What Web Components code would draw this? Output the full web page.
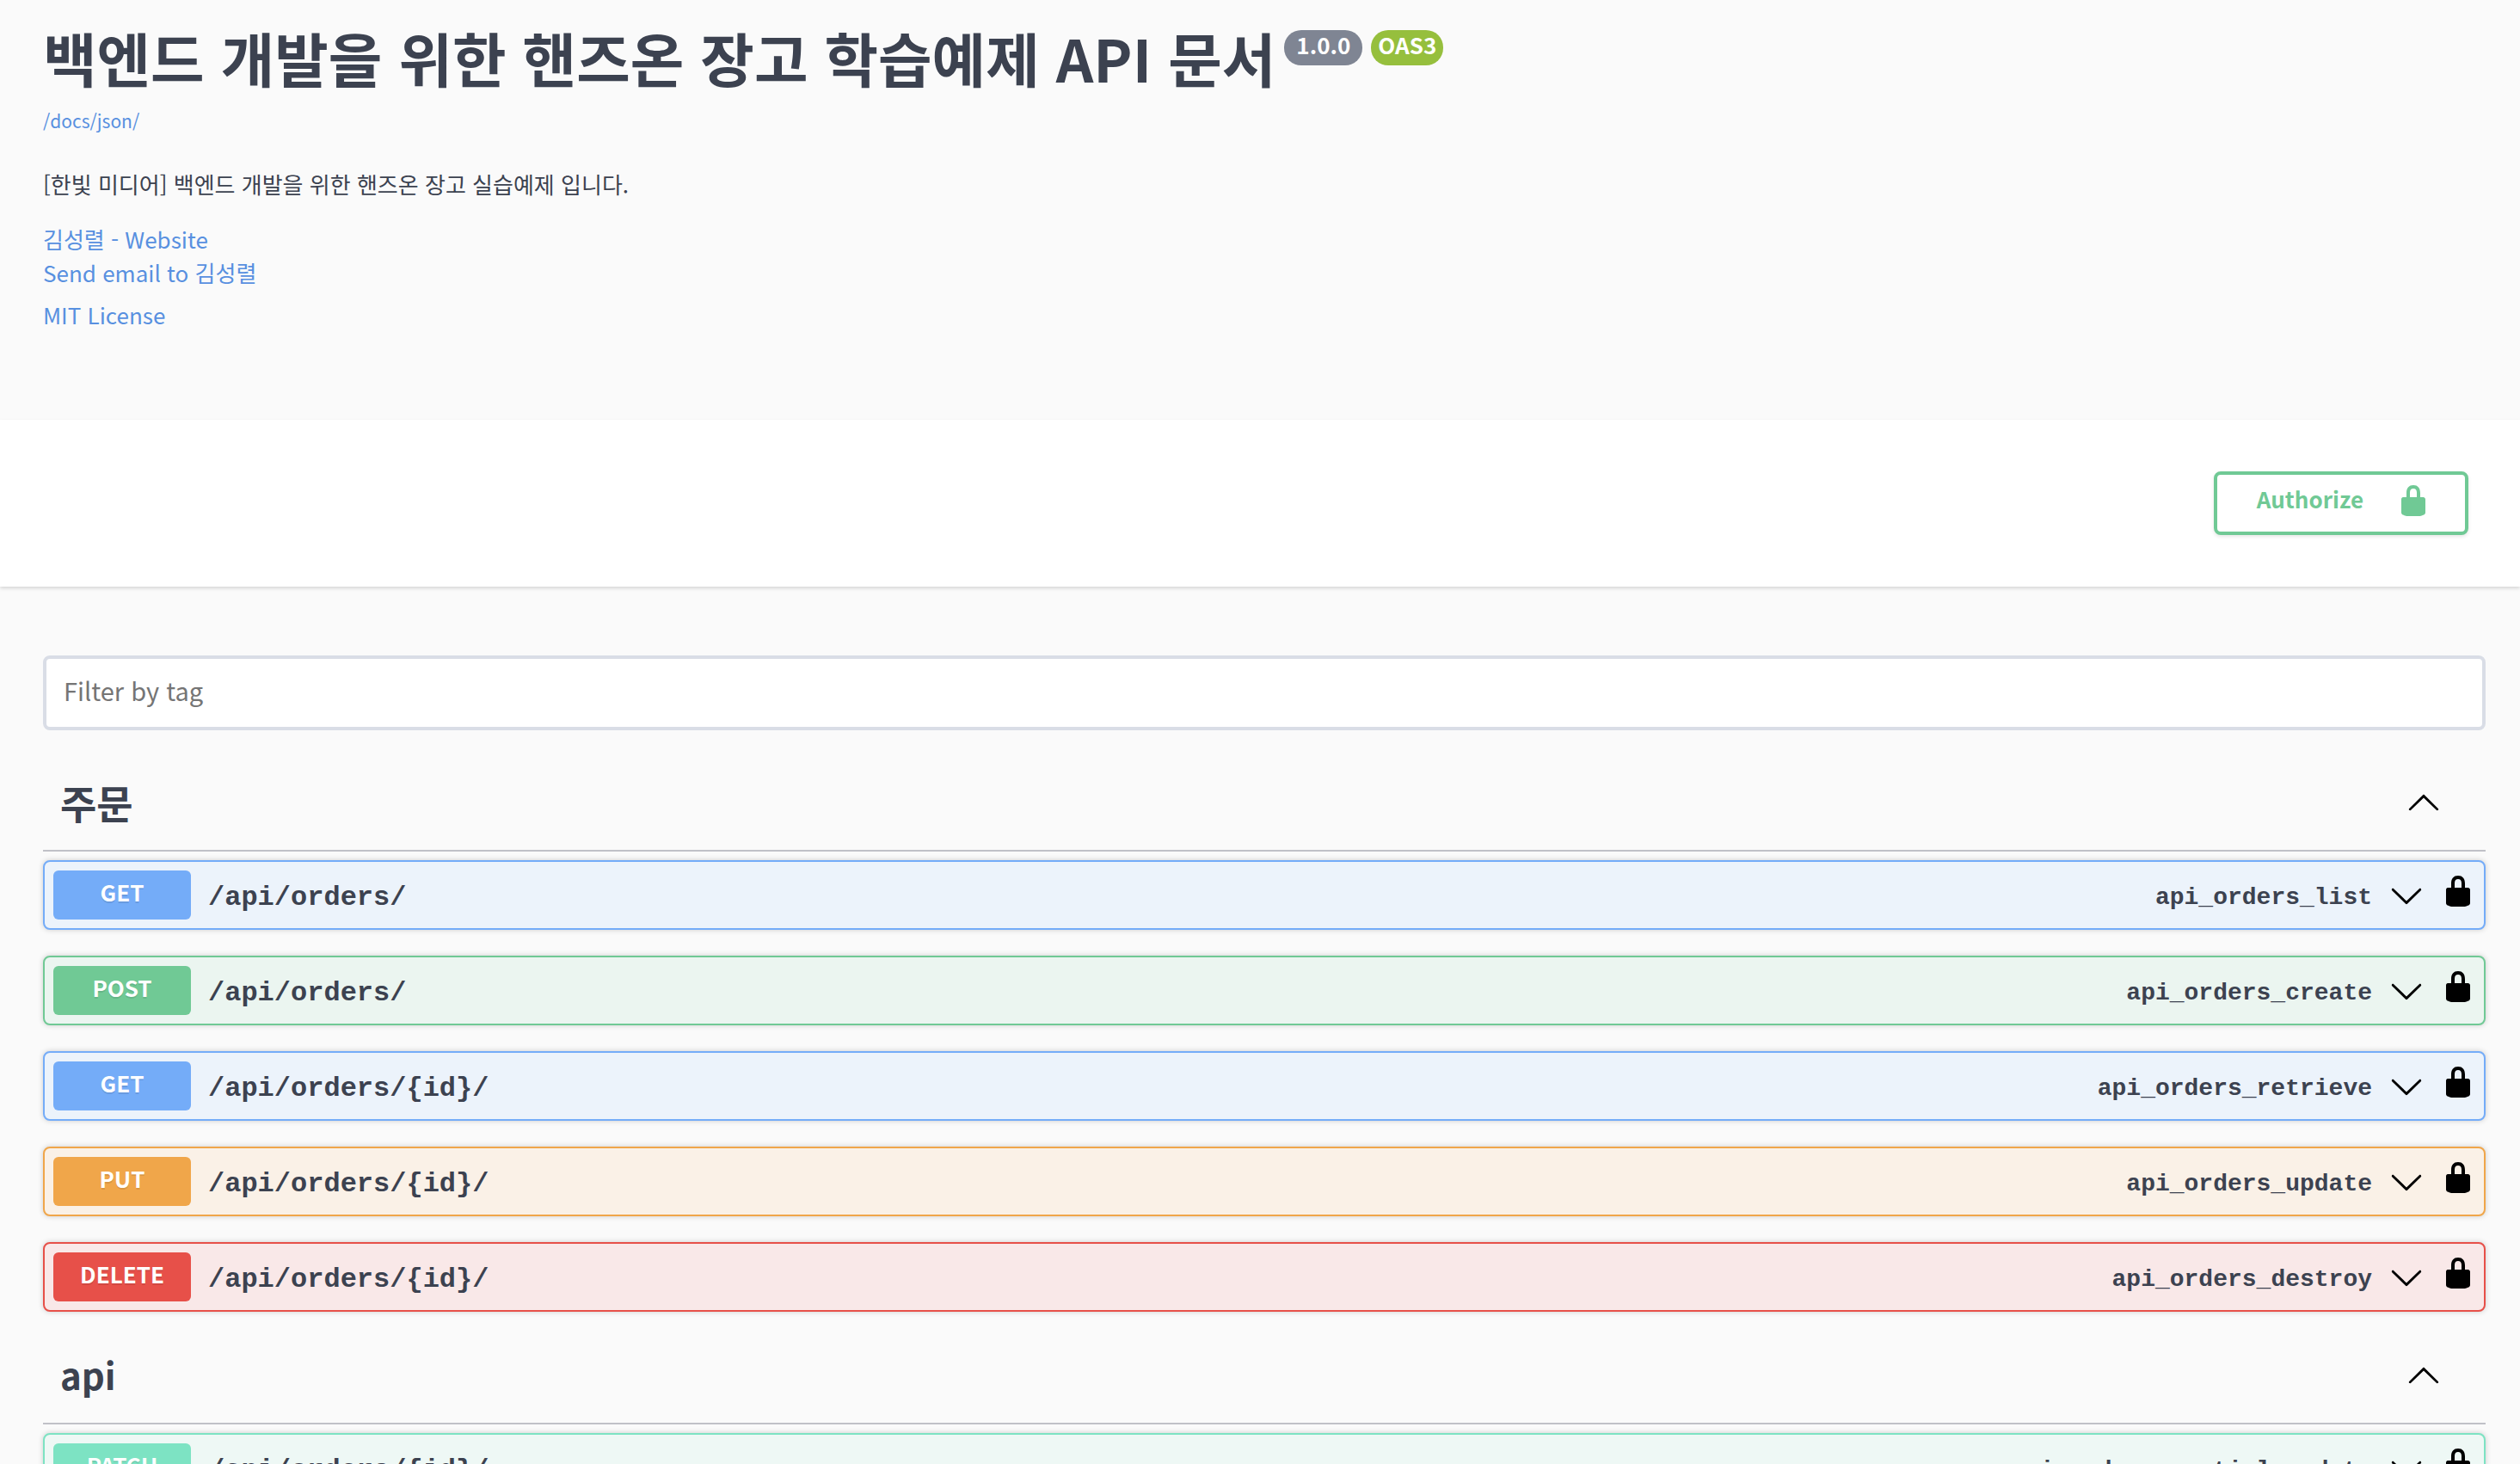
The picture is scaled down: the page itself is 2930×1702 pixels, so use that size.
<!DOCTYPE html>
<html lang="ko">
<head>
<meta charset="utf-8">
<meta name="viewport" content="width=device-width, initial-scale=1">
<title>백엔드 개발을 위한 핸즈온 장고 학습예제 API 문서</title>
<style>
  :root {
    --ink: #3c4250;
    --link: #5890e0;
    --page: #fafafa;
    --get: #74acf8;
    --get-tint: #ecf3fb;
    --post: #70c995;
    --post-tint: #ebf5f0;
    --put: #f0a64a;
    --put-tint: #faf1e7;
    --delete: #e75049;
    --delete-tint: #f9e8e8;
    --patch: #7de3c3;
    --patch-tint: #eef8f5;
    --mono: "Liberation Mono", monospace;
  }
  body {
    margin: 0;
    background: var(--page);
    color: var(--ink);
    font: 26px/39px "Noto Sans CJK KR", "Open Sans", sans-serif;
  }
</style>
</head>
<body>
<api-docs>
  <api-info slot="info" version="1.0.0" spec="OAS3" url="/docs/json/">
    <span slot="title">백엔드 개발을 위한 핸즈온 장고 학습예제 API 문서</span>
    <span slot="description">[한빛 미디어] 백엔드 개발을 위한 핸즈온 장고 실습예제 입니다.</span>
    <info-link slot="contact" href="#website">김성렬 - Website</info-link>
    <info-link slot="contact" href="#email">Send email to 김성렬</info-link>
    <info-link slot="license" href="#license">MIT License</info-link>
  </api-info>
  <auth-bar slot="auth">Authorize</auth-bar>
  <tag-filter></tag-filter>
  <tag-section name="주문" lang="ko">
    <api-operation method="get" path="/api/orders/" operation="api_orders_list"></api-operation>
    <api-operation method="post" path="/api/orders/" operation="api_orders_create"></api-operation>
    <api-operation method="get" path="/api/orders/{id}/" operation="api_orders_retrieve"></api-operation>
    <api-operation method="put" path="/api/orders/{id}/" operation="api_orders_update"></api-operation>
    <api-operation method="delete" path="/api/orders/{id}/" operation="api_orders_destroy"></api-operation>
  </tag-section>
  <tag-section name="api" lang="en">
    <api-operation method="patch" path="/api/orders/{id}/" operation="api_orders_partial_update"></api-operation>
  </tag-section>
</api-docs>

<script>
const ICONS = {
  lock: 'M15.8 8H14V5.6C14 2.703 12.665 1 10 1 7.334 1 6 2.703 6 5.6V8H4c-.553 0-1 .646-1 1.199V17c0 .549.428 1.139.951 1.307l1.197.387C5.672 18.861 6.55 19 7.1 19h5.8c.549 0 1.428-.139 1.951-.307l1.196-.387c.524-.167.953-.757.953-1.306V9.199C17 8.646 16.352 8 15.8 8zM12 8H8V5.199C8 3.754 8.797 3 10 3c1.203 0 2 .754 2 2.199V8z',
  down: 'M17.418 6.109c.272-.268.709-.268.979 0s.271.701 0 .969l-7.908 7.83c-.27.268-.707.268-.979 0l-7.908-7.83c-.27-.268-.27-.701 0-.969.271-.268.709-.268.979 0L10 13.25l7.418-7.141z',
  up: 'M17.418 14.908c.272.268.709.268.979 0s.271-.701 0-.969l-7.908-7.83c-.27-.268-.707-.268-.979 0l-7.908 7.83c-.27.268-.27.701 0 .969.271.268.709.268.979 0L10 7.767l7.418 7.141z'
};

class BaseElement extends HTMLElement {
  connectedCallback() {
    if (this.shadowRoot) return;
    this.attachShadow({ mode: 'open' }).innerHTML = `
      <style>
        button { margin: 0; border: 0; background: none; color: inherit; font: inherit; cursor: pointer; }
        a { color: var(--link); text-decoration: none; }
        ${this.css()}
      </style>${this.html()}`;
  }
  css() { return ''; }
  html() { return '<slot></slot>'; }
}

// 20x20 glyph shown at 40px
class DocIcon extends BaseElement {
  css() { return ':host { display: block; flex: none; width: 40px; height: 40px; } svg { display: block; width: 100%; height: 100%; fill: currentColor; }'; }
  html() { return `<svg viewBox="0 0 20 20" aria-hidden="true"><path d="${ICONS[this.getAttribute('name')]}"/></svg>`; }
}

// Page frame that scrolls inside the window
class ApiDocs extends BaseElement {
  css() {
    return `
      :host { display: block; height: 100vh; overflow: auto; scrollbar-width: none; }
      main { padding: 80px 40px 60px 50px; }`;
  }
  html() { return '<slot name="info"></slot><slot name="auth"></slot><main><slot></slot></main>'; }
}

class ApiInfo extends BaseElement {
  css() {
    return `
      :host { display: block; padding: 27px 40px 103px 50px; }
      .title { display: flex; align-items: flex-start; gap: 10px; }
      h1 { margin: 0; font-size: 68px; line-height: 80px; font-weight: 700; }
      .pill { margin-top: 8px; padding: 0 14px 8px; border-radius: 20px; background: #7f8593; color: #fff; line-height: 33px; font-weight: 700; }
      .pill.spec { padding: 0 8px 8px; background: #96bf3d; }
      .url { display: block; margin-top: 18px; font-size: 21px; line-height: 30px; }
      p { margin: 39px 0 24px; line-height: 40px; }
      .license { margin-top: 10px; }`;
  }
  html() {
    const url = this.getAttribute('url');
    return `
      <div class="title">
        <h1><slot name="title"></slot></h1>
        <span class="pill">${this.getAttribute('version')}</span>
        <span class="pill spec">${this.getAttribute('spec')}</span>
      </div>
      <a class="url" href="${url}">${url}</a>
      <p><slot name="description"></slot></p>
      <div><slot name="contact"></slot></div>
      <div class="license"><slot name="license"></slot></div>`;
  }
}

class InfoLink extends BaseElement {
  css() { return ':host { display: block; }'; }
  html() { return `<a href="${this.getAttribute('href')}"><slot></slot></a>`; }
}

class AuthBar extends BaseElement {
  css() {
    return `
      :host { display: flex; justify-content: flex-end; padding: 60px; background: #fff; box-shadow: 0 2px 4px rgba(0, 0, 0, .15); }
      button { display: flex; align-items: flex-start; gap: 38px; padding: 10px 40px 16px 46px; border: 4px solid var(--post); border-radius: 8px; background: #fff; color: var(--post); line-height: 36px; font-weight: 700; box-shadow: 0 2px 4px rgba(0, 0, 0, .1); }`;
  }
  html() { return '<button type="button"><slot></slot><doc-icon name="lock"></doc-icon></button>'; }
}

class TagFilter extends BaseElement {
  css() {
    return `
      :host { display: block; margin-bottom: 40px; }
      input { display: block; box-sizing: border-box; width: 100%; margin: 0; padding: 12px 20px 20px; border: 4px solid #d9dde6; border-radius: 8px; background: #fff; color: var(--ink); font: inherit; font-size: 29px; line-height: 46px; height: 87px; }
      input::placeholder { color: #757575; opacity: 1; }`;
  }
  html() { return '<input type="text" placeholder="Filter by tag" aria-label="Filter by tag">'; }
}

class TagSection extends BaseElement {
  css() {
    return `
      :host { display: block; }
      header { display: flex; align-items: center; justify-content: space-between; padding: 8px 52px 21px 20px; border-bottom: 2px solid #c0c1c7; }
      h3 { margin: 0; font-size: 46px; line-height: 70px; font-weight: 700; }
      :host(:lang(en)) h3 { font-size: 42px; }
      button { padding: 0; color: #000; }
      .list { display: grid; gap: 30px; padding: 10px 0 30px; }`;
  }
  html() {
    const name = this.getAttribute('name');
    return `
      <header><h3>${name}</h3><button type="button" aria-label="${name}"><doc-icon name="up"></doc-icon></button></header>
      <div class="list"><slot></slot></div>`;
  }
}

class ApiOperation extends BaseElement {
  css() {
    const m = this.getAttribute('method');
    return `
      :host { display: flex; align-items: flex-start; gap: 20px; padding: 10px; border: 2px solid var(--${m}); border-radius: 8px; background: var(--${m}-tint); box-shadow: 0 0 6px rgba(0, 0, 0, .19); }
      .summary { flex: 1; display: flex; align-items: center; gap: 20px; min-width: 0; padding: 0; text-align: left; }
      .method { width: 160px; padding: 7px 0 14px; border-radius: 6px; background: var(--${m}); color: #fff; line-height: 36px; font-weight: 700; text-align: center; text-shadow: 0 2px 0 rgba(0, 0, 0, .1); }
      .path, .id { padding-top: 6px; font-family: var(--mono); font-weight: 700; line-height: 40px; }
      .path { flex: 1; font-size: 32px; }
      .id { font-size: 28px; }
      .summary doc-icon { color: #000; }
      .auth { padding: 4px 0 0; color: #000; }`;
  }
  html() {
    return `
      <button class="summary" type="button">
        <span class="method">${this.getAttribute('method').toUpperCase()}</span>
        <span class="path">${this.getAttribute('path')}</span>
        <span class="id">${this.getAttribute('operation')}</span>
        <doc-icon name="down"></doc-icon>
      </button>
      <button class="auth" type="button" aria-label="Authorize"><doc-icon name="lock"></doc-icon></button>`;
  }
}

customElements.define('doc-icon', DocIcon);
customElements.define('api-docs', ApiDocs);
customElements.define('api-info', ApiInfo);
customElements.define('info-link', InfoLink);
customElements.define('auth-bar', AuthBar);
customElements.define('tag-filter', TagFilter);
customElements.define('tag-section', TagSection);
customElements.define('api-operation', ApiOperation);
</script>
</body>
</html>
